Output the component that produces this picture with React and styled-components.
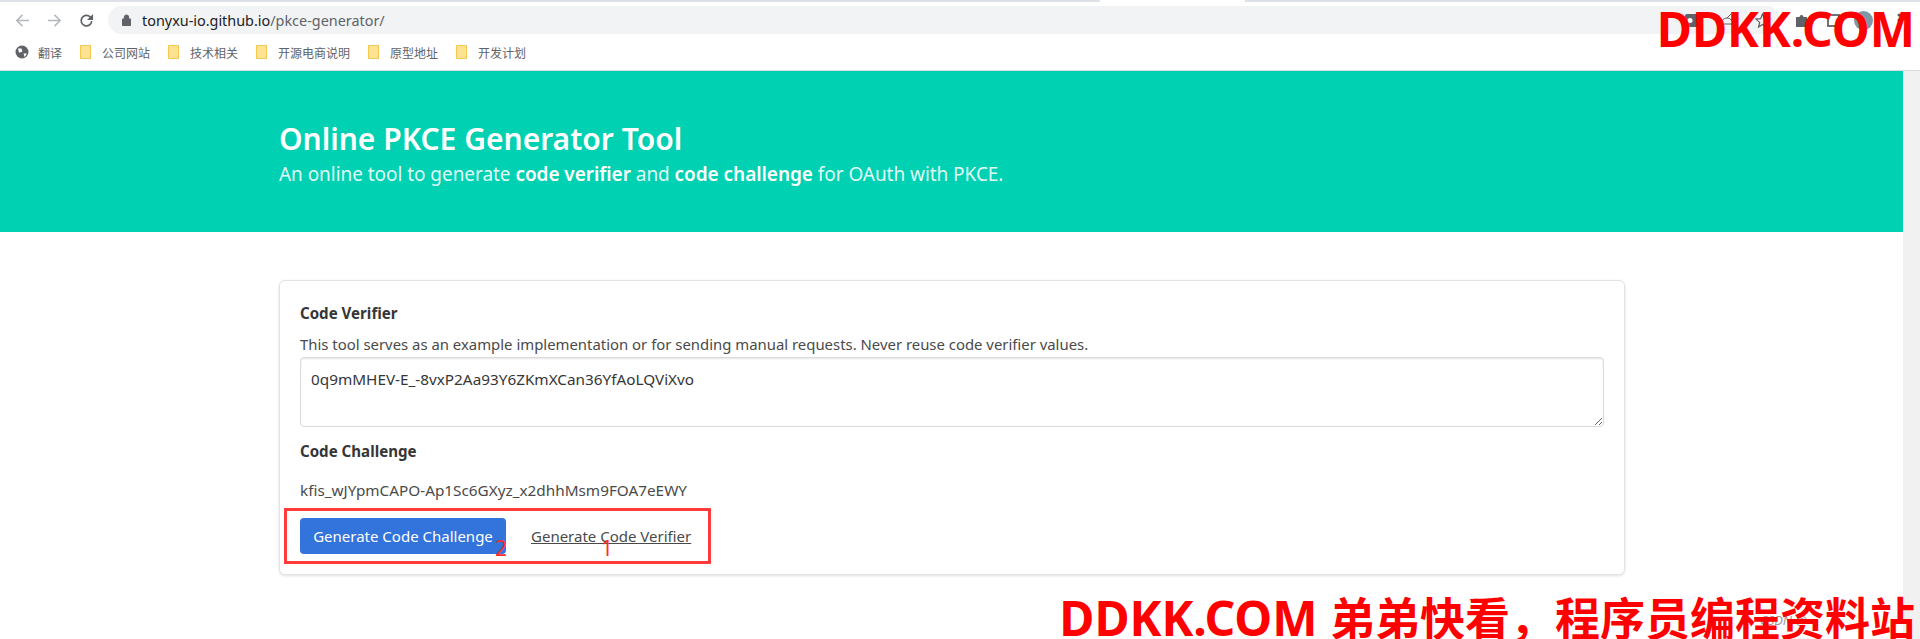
import React from 'react';
import styled, { createGlobalStyle } from 'styled-components';

const GlobalStyle = createGlobalStyle`
  html, body {
    margin: 0;
    padding: 0;
    background: #fff;
    overflow: hidden;
  }
`;

const uiFont = `'Noto Sans', 'Noto Sans CJK SC', sans-serif`;

const Shot = styled.div`
  position: relative;
  width: 1920px;
  height: 639px;
  overflow: hidden;
  background: #fff;
  font-family: ${uiFont};
  color: #4a4a4a;
`;

/* browser chrome */
const TabStrip = styled.div`
  height: 2px;
  background: #dee1e6;
`;

const ActiveTab = styled.div`
  width: 145px;
  height: 2px;
  margin-left: 1100px;
  background: #fff;
`;

const Toolbar = styled.div`
  display: flex;
  align-items: center;
  height: 34px;
  padding: 2px 0 0 15px;
  box-sizing: border-box;
`;

const NavIcon = styled.svg`
  width: 15px;
  height: 15px;
  margin-right: 17px;
  flex: none;
  &:nth-of-type(3) {
    margin-right: 14px;
  }
`;

const Omnibox = styled.div`
  flex: 1;
  display: flex;
  align-items: center;
  height: 28px;
  padding: 0 10px 0 14px;
  border-radius: 14px;
  background: #f1f3f4;
  font-size: 14.4px;
  color: #202124;
  span {
    color: #5f6368;
  }
`;

const LockIcon = styled.svg`
  margin-right: 11px;
`;

const OmniboxIcons = styled.div`
  display: flex;
  align-items: center;
  gap: 21px;
  margin-left: auto;
`;

const ToolIcons = styled.div`
  display: flex;
  align-items: center;
  width: 140px;
  padding-left: 16px;
  box-sizing: border-box;
`;

const PuzzleIcon = styled.svg`
  margin-right: 18px;
`;

const WindowIcon = styled.svg`
  margin-right: 14px;
`;

const Avatar = styled.div`
  width: 19px;
  height: 19px;
  margin-right: 24px;
  border-radius: 50%;
  background: #7f98a6;
`;

const Bookmarks = styled.div`
  display: flex;
  align-items: center;
  height: 35px;
  box-sizing: border-box;
  padding: 0 0 2px 15px;
  border-bottom: 1px solid #dadce0;
  font-size: 12px;
  font-family: 'Noto Sans CJK SC', sans-serif;
  color: #5f6368;
`;

const Bookmark = styled.div`
  display: flex;
  align-items: center;
  gap: ${(p) => (p.$first ? 9 : 11)}px;
  margin-right: 18px;
`;

/* page */
const PageRow = styled.div`
  display: flex;
  height: 568px;
`;

const Main = styled.div`
  flex: 1;
  min-width: 0;
`;

const Scrollbar = styled.div`
  width: 17px;
  background: #f1f1f1;
`;

const Hero = styled.section`
  box-sizing: border-box;
  height: 161px;
  padding: 50px 0 0 279px;
  background: #00d1b2;
  color: #fff;
`;

const HeroTitle = styled.h1`
  margin: 0;
  font-size: 30px;
  line-height: 36px;
  font-weight: 600;
`;

const HeroSubtitle = styled.p`
  margin: 3px 0 0;
  font-size: 19px;
  line-height: 28px;
  letter-spacing: -0.05px;
  color: rgba(255, 255, 255, 0.9);
  strong {
    font-weight: 600;
    color: #fff;
  }
`;

const Card = styled.div`
  box-sizing: border-box;
  width: 1346px;
  height: 295px;
  margin: 48px 0 0 279px;
  padding: 20px 20px 0 20px;
  background: #fff;
  border-radius: 6px;
  border: 1px solid #e3e3e3;
  box-shadow: 0 1px 3px rgba(10, 10, 10, 0.12);
`;

const Label = styled.div`
  font-size: 15.1px;
  line-height: 24px;
  font-weight: 700;
  color: #363636;
`;

const Help = styled.p`
  margin: 9px 0 0;
  font-size: 14.9px;
  line-height: 20px;
`;

const CodeInput = styled.textarea`
  display: block;
  box-sizing: border-box;
  width: 100%;
  height: 70px;
  margin: 3px 0 12px;
  padding: 11px 10px 8px;
  border: 1px solid #dbdbdb;
  border-radius: 4px;
  box-shadow: inset 0 1px 2px rgba(10, 10, 10, 0.1);
  font: 15.3px/20px ${uiFont};
  color: #363636;
  outline: none;
`;

const Result = styled.div`
  margin-top: 15px;
  font-size: 15.3px;
  line-height: 24px;
`;

const Actions = styled.div`
  display: flex;
  align-items: center;
  gap: 25px;
  margin-top: 16px;
`;

const PrimaryButton = styled.button`
  box-sizing: border-box;
  width: 206px;
  height: 36px;
  padding: 0;
  border: none;
  border-radius: 4px;
  background: #3273dc;
  color: #fff;
  font: 15px ${uiFont};
`;

const TextLink = styled.a`
  font-size: 15px;
  color: #4a4a4a;
  text-decoration: underline;
`;

/* annotations over the screenshot */
const MarkBox = styled.div`
  position: absolute;
  left: 284px;
  top: 508px;
  width: 427px;
  height: 56px;
  box-sizing: border-box;
  border: 3px solid #ff3b3b;
`;

const MarkNumber = styled.span`
  position: absolute;
  left: ${(p) => p.$x}px;
  top: 536px;
  font-size: 21px;
  line-height: 24px;
  color: #ff2a2a;
`;

const SourceMark = styled.span`
  position: absolute;
  left: 1760px;
  top: 611px;
  font-size: 13px;
  line-height: 18px;
  font-style: italic;
  color: #999;
`;

const Watermark = styled.div`
  position: absolute;
  color: #ff0000;
  font-family: ${uiFont};
  font-weight: 700;
  font-size: 48px;
  white-space: nowrap;
`;

const TopMark = styled(Watermark)`
  right: 5px;
  top: 3px;
  line-height: 52px;
`;

const BottomMark = styled(Watermark)`
  right: 5px;
  bottom: -6px;
  line-height: 52px;
  span {
    font-size: 45px;
  }
`;

const Folder = () => (
  <svg width="11" height="14" viewBox="0 0 11 14">
    <path d="M.5.5h10v13H.5z" fill="#fde293" stroke="#f2c94c" />
  </svg>
);

const bookmarks = ['公司网站', '技术相关', '开源电商说明', '原型地址', '开发计划'];

export default function App() {
  return (
    <Shot>
      <GlobalStyle />
      <TabStrip>
        <ActiveTab />
      </TabStrip>
      <Toolbar>
        <NavIcon viewBox="0 0 16 16" fill="none" stroke="#b5b8bc" strokeWidth="1.7">
          <path d="M15 8H2M8 2 2 8l6 6" />
        </NavIcon>
        <NavIcon viewBox="0 0 16 16" fill="none" stroke="#b5b8bc" strokeWidth="1.7">
          <path d="M1 8h13M8 2l6 6-6 6" />
        </NavIcon>
        <NavIcon viewBox="0 0 16 16" fill="none" stroke="#5f6368" strokeWidth="1.8">
          <path d="M13.500 8.500a5.600 5.600 0 1 1-1.700-4.400L13.500 6" />
          <path d="M15 1v6.500H8.500z" fill="#5f6368" stroke="none" />
        </NavIcon>
        <Omnibox>
          <LockIcon width="9" height="12" viewBox="0 0 9 12">
            <path d="M.5 5h8v6.500h-8zM2.300 5V3.200a2.200 2.200 0 0 1 4.400 0V5" fill="#5f6368" stroke="#5f6368" />
          </LockIcon>
          tonyxu-io.github.io<span>/pkce-generator/</span>
          <OmniboxIcons>
            <svg width="14" height="13" viewBox="0 0 14 13"><rect width="14" height="13" rx="2" fill="#5f6368" /><circle cx="5" cy="6.500" r="2.500" fill="#fff" /></svg>
            <svg width="14" height="14" viewBox="0 0 14 14" fill="none" stroke="#5f6368"><path d="M1 11a6 6 0 0 1 12 0zM7 5l4-4" /></svg>
            <svg width="15" height="15" viewBox="0 0 16 16" fill="none" stroke="#5f6368" strokeWidth="1.300"><path d="m8 1 2 5 5 .5-4 3.500 1.200 5L8 12.300 3.800 15 5 10 1 6.500 6 6z" /></svg>
          </OmniboxIcons>
        </Omnibox>
        <ToolIcons>
          <PuzzleIcon width="13" height="14" viewBox="0 0 13 14"><path d="M0 4h3.500a2 2 0 0 1 4 0H11v3a2 2 0 0 1 0 4v3H0z" fill="#5f6368" /></PuzzleIcon>
          <WindowIcon width="13" height="13" viewBox="0 0 13 13" fill="none" stroke="#5f6368" strokeWidth="1.800"><rect x="1" y="1" width="11" height="11" /></WindowIcon>
          <Avatar />
          <svg width="4" height="14" viewBox="0 0 4 14" fill="#5f6368"><circle cx="2" cy="2" r="1.500" /><circle cx="2" cy="7" r="1.500" /><circle cx="2" cy="12" r="1.500" /></svg>
        </ToolIcons>
      </Toolbar>
      <Bookmarks>
        <Bookmark $first>
          <svg width="14" height="14" viewBox="0 0 14 14"><circle cx="7" cy="7" r="6.500" fill="#5f6368" /><path d="M3 3.500h3.500l1 3-3.500 1.200zM8.500 8.500H12l-2.500 3.500z" fill="#fff" /></svg>
          翻译
        </Bookmark>
        {bookmarks.map((name) => (
          <Bookmark key={name}>
            <Folder />
            {name}
          </Bookmark>
        ))}
      </Bookmarks>
      <PageRow>
        <Main>
          <Hero>
            <HeroTitle>Online PKCE Generator Tool</HeroTitle>
            <HeroSubtitle>
              An online tool to generate <strong>code verifier</strong> and <strong>code challenge</strong> for OAuth with PKCE.
            </HeroSubtitle>
          </Hero>
          <Card>
            <Label>Code Verifier</Label>
            <Help>This tool serves as an example implementation or for sending manual requests. Never reuse code verifier values.</Help>
            <CodeInput readOnly value="0q9mMHEV-E_-8vxP2Aa93Y6ZKmXCan36YfAoLQViXvo" />
            <Label>Code Challenge</Label>
            <Result>kfis_wJYpmCAPO-Ap1Sc6GXyz_x2dhhMsm9FOA7eEWY</Result>
            <Actions>
              <PrimaryButton>Generate Code Challenge</PrimaryButton>
              <TextLink>Generate Code Verifier</TextLink>
            </Actions>
          </Card>
        </Main>
        <Scrollbar />
      </PageRow>
      <MarkBox />
      <MarkNumber $x={495}>2</MarkNumber>
      <MarkNumber $x={601}>1</MarkNumber>
      <SourceMark>CSDN @</SourceMark>
      <TopMark>DDKK.COM</TopMark>
      <BottomMark>DDKK.COM <span>弟弟快看，程序员编程资料站</span></BottomMark>
    </Shot>
  );
}
